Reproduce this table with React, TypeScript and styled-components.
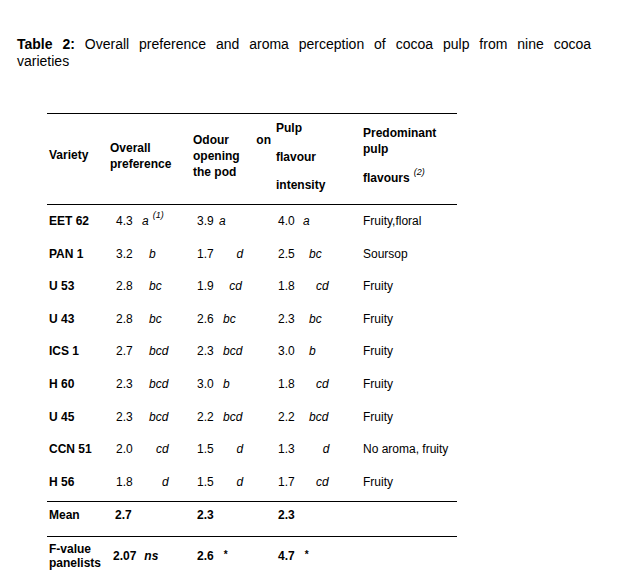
import React from "react";
import styled, { createGlobalStyle } from "styled-components";

const Global = createGlobalStyle`
  html, body { margin: 0; padding: 0; background: #fff; }
  body { font-family: "Liberation Sans", Arial, sans-serif; color: #000; }
`;

const COLS = "63px 83px 83px 87px 94px";

const Page = styled.div`
  width: 618px;
  padding-top: 36px;
`;

const Caption = styled.p`
  margin: 0 0 0 17px;
  width: 574px;
  font-size: 14px;
  line-height: 17px;
  text-align: justify;
`;

const CaptionLine = styled.span`
  display: block;
  text-align: justify;
  text-align-last: justify;
`;

const Table = styled.div`
  margin: 43px 0 0 47px;
  width: 410px;
  font-size: 12px;
`;

const HeaderRow = styled.div`
  display: grid;
  grid-template-columns: ${COLS};
  height: 90px;
  border-top: 1px solid #000;
  border-bottom: 1px solid #000;
  font-weight: bold;
`;

const HeadCell = styled.div<{ $pt: number; $pl?: number; $lh?: number }>`
  padding-top: ${(p) => p.$pt}px;
  padding-left: ${(p) => p.$pl ?? 0}px;
  line-height: ${(p) => p.$lh ?? 16}px;
`;

const SplitLine = styled.div<{ $w: number }>`
  display: flex;
  justify-content: space-between;
  width: ${(p) => p.$w}px;
`;

const HeadBlock = styled.div<{ $mt: number }>`
  margin-top: ${(p) => p.$mt}px;
`;

const Body = styled.div`
  padding-bottom: 3px;
  border-bottom: 1px solid #000;
`;

const Row = styled.div<{ $h: number; $pt: number; $bold?: boolean; $rule?: boolean }>`
  display: grid;
  grid-template-columns: ${COLS};
  align-items: start;
  height: ${(p) => p.$h}px;
  padding-top: ${(p) => p.$pt}px;
  box-sizing: border-box;
  line-height: 14px;
  font-weight: ${(p) => (p.$bold ? "bold" : "normal")};
  border-bottom: ${(p) => (p.$rule ? "1px solid #000" : "none")};
`;

const NameCell = styled.div<{ $pt?: number }>`
  padding-left: 2px;
  font-weight: bold;
  margin-top: ${(p) => p.$pt ?? 0}px;
`;

const ValueCell = styled.div<{ $pl: number; $pt?: number }>`
  display: flex;
  align-items: baseline;
  white-space: nowrap;
  padding-left: ${(p) => p.$pl}px;
  margin-top: ${(p) => p.$pt ?? 0}px;
`;

const Num = styled.span`
  display: inline-block;
`;

const Letters = styled.span<{ $shift: number }>`
  font-style: italic;
  margin-left: ${(p) => p.$shift}px;
`;

const Sup = styled.sup<{ $ml: number }>`
  font-size: 9px;
  font-style: italic;
  font-weight: normal;
  line-height: 0;
  vertical-align: 0;
  position: relative;
  top: -7px;
  margin-left: ${(p) => p.$ml}px;
`;

const Star = styled.span`
  font-size: 10px;
  font-weight: bold;
  position: relative;
  top: -2px;
  margin-left: 10px;
`;

const Ns = styled.span`
  font-style: italic;
  font-weight: bold;
  margin-left: 8px;
`;

const TextCell = styled.div``;

const NUM_W = 16.7;

type ColKey = "ov" | "od" | "pu";
const SLOTS: Record<ColKey, Record<string, number>> = {
  ov: { a: 26, b: 33, c: 40, d: 46 },
  od: { a: 22, b: 26, c: 32.3, d: 39.5 },
  pu: { a: 25, b: 31, c: 38, d: 44.7 },
};
const PADS: Record<ColKey, number> = { ov: 6, od: 4, pu: 2 };

type DataRow = {
  name: string;
  ov: [string, string];
  od: [string, string];
  pu: [string, string];
  fl: string;
  sup?: boolean;
};

const rows: DataRow[] = [
  { name: "EET 62", ov: ["4.3", "a"], od: ["3.9", "a"], pu: ["4.0", "a"], fl: "Fruity,floral", sup: true },
  { name: "PAN 1", ov: ["3.2", "b"], od: ["1.7", "d"], pu: ["2.5", "bc"], fl: "Soursop" },
  { name: "U 53", ov: ["2.8", "bc"], od: ["1.9", "cd"], pu: ["1.8", "cd"], fl: "Fruity" },
  { name: "U 43", ov: ["2.8", "bc"], od: ["2.6", "bc"], pu: ["2.3", "bc"], fl: "Fruity" },
  { name: "ICS 1", ov: ["2.7", "bcd"], od: ["2.3", "bcd"], pu: ["3.0", "b"], fl: "Fruity" },
  { name: "H 60", ov: ["2.3", "bcd"], od: ["3.0", "b"], pu: ["1.8", "cd"], fl: "Fruity" },
  { name: "U 45", ov: ["2.3", "bcd"], od: ["2.2", "bcd"], pu: ["2.2", "bcd"], fl: "Fruity" },
  { name: "CCN 51", ov: ["2.0", "cd"], od: ["1.5", "d"], pu: ["1.3", "d"], fl: "No aroma, fruity" },
  { name: "H 56", ov: ["1.8", "d"], od: ["1.5", "d"], pu: ["1.7", "cd"], fl: "Fruity" },
];

function Value({ col, v, sup }: { col: ColKey; v: [string, string]; sup?: boolean }) {
  const shift = SLOTS[col][v[1][0]] - NUM_W;
  return (
    <ValueCell $pl={PADS[col]}>
      <Num>{v[0]}</Num>
      <Letters $shift={shift}>{v[1]}</Letters>
      {sup && <Sup $ml={4}>(1)</Sup>}
    </ValueCell>
  );
}

export default function App() {
  return (
    <Page>
      <Global />
      <Caption>
        <CaptionLine>
          <b>Table 2:</b> Overall preference and aroma perception of cocoa pulp from nine cocoa
        </CaptionLine>
        varieties
      </Caption>
      <Table>
        <HeaderRow>
          <HeadCell $pt={34} $pl={2} $lh={14}>Variety</HeadCell>
          <HeadCell $pt={26}>
            Overall
            <br />
            preference
          </HeadCell>
          <HeadCell $pt={18}>
            <SplitLine $w={78}>
              <span>Odour</span>
              <span>on</span>
            </SplitLine>
            opening
            <br />
            the pod
          </HeadCell>
          <HeadCell $pt={0} $lh={28.5}>
            Pulp
            <br />
            flavour
            <br />
            intensity
          </HeadCell>
          <HeadCell $pt={11}>
            Predominant
            <br />
            pulp
            <HeadBlock $mt={13}>
              flavours<Sup $ml={4}>(2)</Sup>
            </HeadBlock>
          </HeadCell>
        </HeaderRow>
        <Body>
          {rows.map((r) => (
            <Row key={r.name} $h={32.6} $pt={9}>
              <NameCell>{r.name}</NameCell>
              <Value col="ov" v={r.ov} sup={r.sup} />
              <Value col="od" v={r.od} />
              <Value col="pu" v={r.pu} />
              <TextCell>{r.fl}</TextCell>
            </Row>
          ))}
        </Body>
        <Row $h={35} $pt={6} $bold $rule>
          <NameCell>Mean</NameCell>
          <ValueCell $pl={5}>2.7</ValueCell>
          <ValueCell $pl={4}>2.3</ValueCell>
          <ValueCell $pl={2}>2.3</ValueCell>
          <TextCell />
        </Row>
        <Row $h={38} $pt={5} $bold>
          <NameCell>
            F-value
            <br />
            panelists
          </NameCell>
          <ValueCell $pl={3} $pt={7}>
            2.07<Ns>ns</Ns>
          </ValueCell>
          <ValueCell $pl={4} $pt={7}>
            2.6<Star>*</Star>
          </ValueCell>
          <ValueCell $pl={2} $pt={7}>
            4.7<Star>*</Star>
          </ValueCell>
          <TextCell />
        </Row>
      </Table>
    </Page>
  );
}
